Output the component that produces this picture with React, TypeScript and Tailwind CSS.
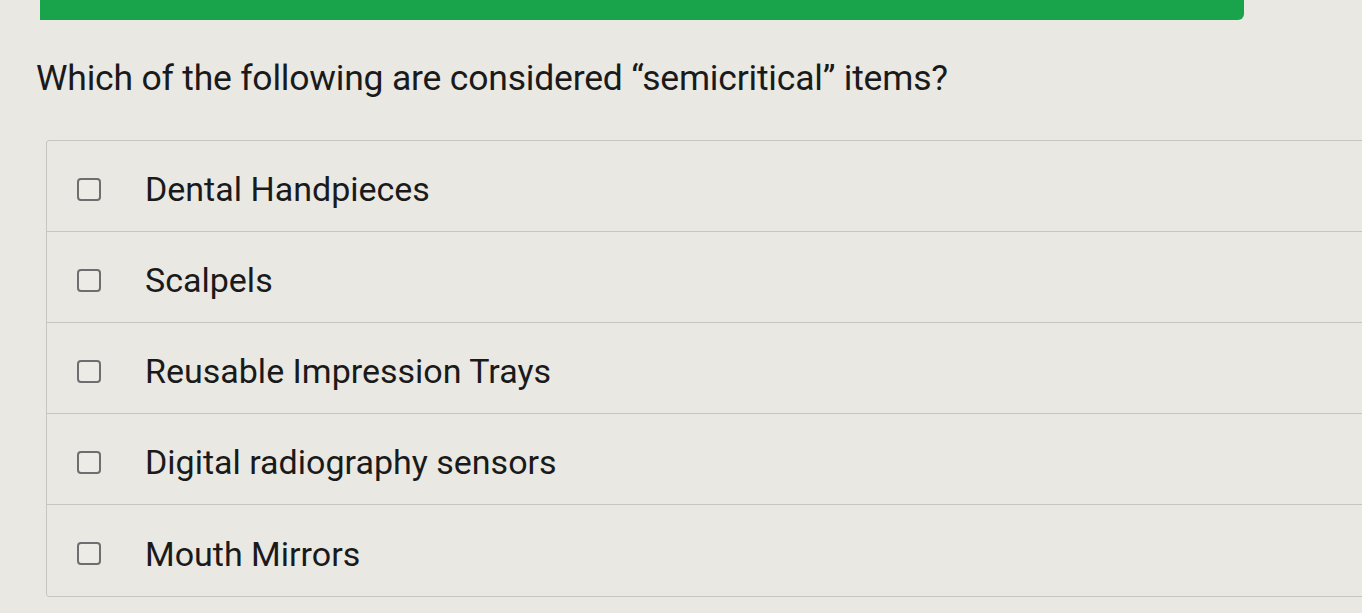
const options = [
  'Dental Handpieces',
  'Scalpels',
  'Reusable Impression Trays',
  'Digital radiography sensors',
  'Mouth Mirrors',
]

export default function App() {
  return (
    <div className="w-[1362px] h-[613px] overflow-hidden bg-[#e9e8e3] font-['Roboto',sans-serif] text-[#1a1a1a]">
      <div className="ml-[40px] w-[1204px] h-[20px] bg-[#19a34b] rounded-br-md" />
      <h1 className="ml-[36px] mt-[36px] text-[35.5px] leading-[44px] tracking-[-0.2px]">
        Which of the following are considered “semicritical” items?
      </h1>
      <div className="ml-[46px] mt-[40px] w-[1340px] border border-[#c6c5c0] rounded-[3px]">
        {options.map((label, i) => (
          <label
            key={label}
            className={
              'flex items-center h-[91px] pl-[30px] gap-[44px] pt-[6px] ' +
              (i < options.length - 1 ? 'border-b border-[#c6c5c0]' : '')
            }
          >
            <span className="w-[24px] h-[23px] rounded-[4px] border-2 border-[#6e6e6e] bg-[#ecebe6] shrink-0" />
            <span className="text-[34px] leading-none">{label}</span>
          </label>
        ))}
      </div>
    </div>
  )
}
